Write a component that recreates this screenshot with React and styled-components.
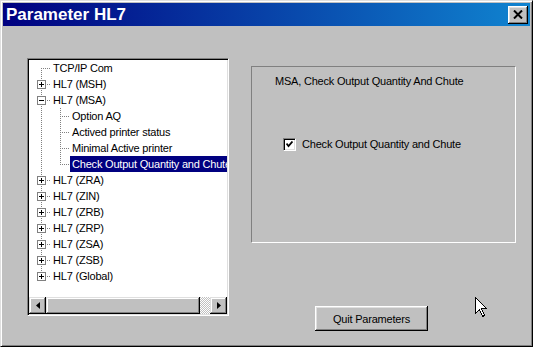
import React from 'react';
import styled, { createGlobalStyle } from 'styled-components';

const GlobalStyle = createGlobalStyle`
  html, body { margin: 0; padding: 0; background: #c0c0c0; }
  body { font-family: "Liberation Sans", Arial, sans-serif; }
  * { box-sizing: border-box; }
`;

const Window = styled.div`
  position: relative;
  width: 533px;
  height: 347px;
  display: flex;
  flex-direction: column;
  background: #c0c0c0;
  border: 1px solid;
  border-color: #dfdfdf #000 #000 #dfdfdf;
  box-shadow: inset 1px 1px #fff, inset -1px -1px #808080;
  padding: 2px;
  overflow: hidden;
`;

const TitleBar = styled.div`
  height: 23px;
  flex: none;
  display: flex;
  align-items: center;
  justify-content: space-between;
  padding: 0 2px 0 2px;
  background: linear-gradient(to right, #000080, #1084d0);
`;

const TitleText = styled.span`
  color: #fff;
  font-family: "Liberation Sans", Arial, sans-serif;
  font-weight: bold;
  font-size: 17px;
  line-height: 20px;
  padding-left: 1px;
`;

const CloseButton = styled.div`
  width: 20px;
  height: 18px;
  display: flex;
  align-items: center;
  justify-content: center;
  background: #c0c0c0;
  box-shadow: inset -1px -1px #000, inset 1px 1px #fff, inset -2px -2px #808080, inset 2px 2px #dfdfdf;
`;

const Body = styled.div`
  flex: 1;
  display: flex;
  align-items: flex-start;
  gap: 22px;
  padding: 32px 0 0 24px;
`;

const TreeBox = styled.div`
  width: 202px;
  height: 258px;
  flex: none;
  display: flex;
  flex-direction: column;
  background: #fff;
  border: 1px solid;
  border-color: #808080 #fff #fff #808080;
  box-shadow: inset 1px 1px #000, inset -1px -1px #dfdfdf;
  padding: 1px;
`;

const TreeList = styled.div`
  flex: 1;
  overflow: hidden;
  padding-left: 3px;
`;

const Row = styled.div`
  display: flex;
  align-items: center;
  height: 16px;
  white-space: nowrap;
`;

const Label = styled.span`
  display: block;
  height: 16px;
  line-height: 16px;
  padding: 0 2px;
  margin-left: 0;
  font-size: 11px;
  letter-spacing: -0.2px;
  color: ${(p) => (p.$selected ? '#fff' : '#000')};
  background: ${(p) => (p.$selected ? '#000080' : 'transparent')};
`;

const Scrollbar = styled.div`
  height: 17px;
  flex: none;
  display: flex;
`;

const raised = `
  background: #c0c0c0;
  box-shadow: inset -1px -1px #000, inset 1px 1px #dfdfdf, inset -2px -2px #808080, inset 2px 2px #fff;
`;

const ArrowButton = styled.div`
  width: 17px;
  height: 17px;
  flex: none;
  display: flex;
  align-items: center;
  justify-content: center;
  ${raised}
`;

const Thumb = styled.div`
  flex: 1;
  ${raised}
`;

const Track = styled.div`
  width: 10px;
  flex: none;
  background-color: #c0c0c0;
  background-image: conic-gradient(#fff 25%, transparent 0 50%, #fff 0 75%, transparent 0);
  background-size: 2px 2px;
`;

const RightColumn = styled.div`
  display: flex;
  flex-direction: column;
  align-items: flex-start;
  margin-top: 8px;
`;

const Panel = styled.div`
  width: 265px;
  height: 177px;
  border: 1px solid;
  border-color: #808080 #fff #fff #808080;
  padding: 8px 0 0 23px;
`;

const PanelTitle = styled.div`
  font-size: 11px;
  line-height: 13px;
  letter-spacing: -0.2px;
  color: #000;
`;

const CheckRow = styled.label`
  display: flex;
  align-items: center;
  gap: 6px;
  margin-top: 50px;
  padding-left: 8px;
  font-size: 11px;
  line-height: 13px;
  letter-spacing: -0.2px;
  color: #000;
`;

const CheckBox = styled.span`
  width: 13px;
  height: 13px;
  flex: none;
  display: flex;
  align-items: center;
  justify-content: center;
  background: #fff;
  border: 1px solid;
  border-color: #808080 #fff #fff #808080;
  box-shadow: inset 1px 1px #000, inset -1px -1px #dfdfdf;
`;

const QuitButton = styled.button`
  margin: 63px 0 0 64px;
  width: 113px;
  height: 25px;
  padding: 0;
  border: none;
  background: #c0c0c0;
  box-shadow: inset -1px -1px #000, inset 1px 1px #fff, inset -2px -2px #808080, inset 2px 2px #dfdfdf;
  font-family: "Liberation Sans", Arial, sans-serif;
  font-size: 11px;
  letter-spacing: -0.2px;
  color: #000;
`;

const Cursor = styled.svg`
  position: absolute;
  left: 474px;
  top: 296px;
`;

const DOT = '#808080';

function Connector({ kind, box }) {
  const v = {
    tee: [0, 16],
    end: [0, 8],
    start: [8, 16],
    pipe: [0, 16],
  }[kind];
  const hasH = kind !== 'pipe';
  return (
    <svg width="19" height="16" style={{ flex: 'none', display: 'block' }} shapeRendering="crispEdges">
      {v && (
        <line x1="9.5" y1={v[0]} x2="9.5" y2={v[1]} stroke={DOT} strokeDasharray="1 1" />
      )}
      {hasH && <line x1="9" y1="8.5" x2="19" y2="8.5" stroke={DOT} strokeDasharray="1 1" />}
      {box && (
        <g>
          <rect x="5.5" y="4.5" width="8" height="8" fill="#fff" stroke="#808080" />
          <line x1="7" y1="8.5" x2="12" y2="8.5" stroke="#000" />
          {box === 'plus' && <line x1="9.5" y1="6" x2="9.5" y2="11" stroke="#000" />}
        </g>
      )}
    </svg>
  );
}

const rows = [
  { label: 'TCP/IP Com', cells: ['start'] },
  { label: 'HL7 (MSH)', cells: ['tee'], box: 'plus' },
  { label: 'HL7 (MSA)', cells: ['tee'], box: 'minus' },
  { label: 'Option AQ', cells: ['pipe', 'tee'] },
  { label: 'Actived printer status', cells: ['pipe', 'tee'] },
  { label: 'Minimal Active printer', cells: ['pipe', 'tee'] },
  { label: 'Check Output Quantity and Chute', cells: ['pipe', 'end'], selected: true },
  { label: 'HL7 (ZRA)', cells: ['tee'], box: 'plus' },
  { label: 'HL7 (ZIN)', cells: ['tee'], box: 'plus' },
  { label: 'HL7 (ZRB)', cells: ['tee'], box: 'plus' },
  { label: 'HL7 (ZRP)', cells: ['tee'], box: 'plus' },
  { label: 'HL7 (ZSA)', cells: ['tee'], box: 'plus' },
  { label: 'HL7 (ZSB)', cells: ['tee'], box: 'plus' },
  { label: 'HL7 (Global)', cells: ['end'], box: 'plus' },
];

export default function App() {
  return (
    <>
      <GlobalStyle />
      <Window>
        <TitleBar>
          <TitleText>Parameter HL7</TitleText>
          <CloseButton>
            <svg width="10" height="9" viewBox="0 0 10 9">
              <path d="M1 0.5 L9 8.5 M9 0.5 L1 8.5" stroke="#000" strokeWidth="2" />
            </svg>
          </CloseButton>
        </TitleBar>
        <Body>
          <TreeBox>
            <TreeList>
              {rows.map((r, i) => (
                <Row key={i}>
                  {r.cells.map((c, j) => (
                    <Connector key={j} kind={c} box={j === r.cells.length - 1 ? r.box : undefined} />
                  ))}
                  <Label $selected={r.selected}>{r.label}</Label>
                </Row>
              ))}
            </TreeList>
            <Scrollbar>
              <ArrowButton>
                <svg width="4" height="7" viewBox="0 0 4 7">
                  <path d="M4 0 L0 3.5 L4 7 Z" fill="#000" />
                </svg>
              </ArrowButton>
              <Thumb />
              <Track />
              <ArrowButton>
                <svg width="4" height="7" viewBox="0 0 4 7">
                  <path d="M0 0 L4 3.5 L0 7 Z" fill="#000" />
                </svg>
              </ArrowButton>
            </Scrollbar>
          </TreeBox>
          <RightColumn>
            <Panel>
              <PanelTitle>MSA, Check Output Quantity And Chute</PanelTitle>
              <CheckRow>
                <CheckBox>
                  <svg width="7" height="7" viewBox="0 0 7 7">
                    <path d="M0.5 2.5 L2.5 5 L6.5 0.5" stroke="#000" strokeWidth="1.8" fill="none" />
                  </svg>
                </CheckBox>
                Check Output Quantity and Chute
              </CheckRow>
            </Panel>
            <QuitButton>Quit Parameters</QuitButton>
          </RightColumn>
        </Body>
        <Cursor width="13" height="21" viewBox="0 0 13 21">
          <path
            d="M0.5 0.5 L0.5 16.5 L4.5 12.5 L7.5 19.5 L9.5 18.5 L6.5 11.5 L11.5 11.5 Z"
            fill="#fff"
            stroke="#000"
            shapeRendering="crispEdges"
          />
        </Cursor>
      </Window>
    </>
  );
}
